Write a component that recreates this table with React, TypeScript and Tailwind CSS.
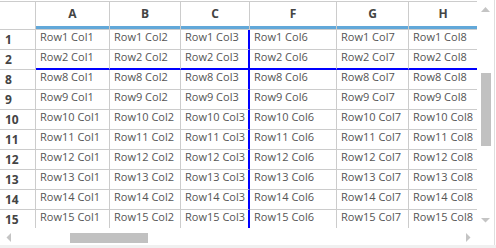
import clsx from "clsx";

const columns = [
  { label: "A", n: 1 },
  { label: "B", n: 2 },
  { label: "C", n: 3 },
  { label: "F", n: 6 },
  { label: "G", n: 7 },
  { label: "H", n: 8 },
];

const rows = [1, 2, 8, 9, 10, 11, 12, 13, 14, 15];

// frozen split: after column C and after row 2
const FROZEN_COL = 2;
const FROZEN_ROW = 1;

function Cell({ row, rowIdx, col, colIdx }: { row: number; rowIdx: number; col: number; colIdx: number }) {
  const last = rowIdx === rows.length - 1;
  return (
    <div
      className={clsx(
        "overflow-hidden whitespace-nowrap pl-[4px] text-[11px] leading-[13px] text-[#555]",
        last ? "h-[18px]" : "h-[20px]",
        colIdx === FROZEN_COL ? "border-r-2 border-r-[#0000ff]" : colIdx < columns.length - 1 ? "border-r border-r-[#cccccc]" : "",
        rowIdx === FROZEN_ROW ? "border-b-2 border-b-[#0000ff]" : !last ? "border-b border-b-[#cccccc]" : ""
      )}
    >
      Row{row} Col{col}
    </div>
  );
}

function ScrollbarY() {
  return (
    <div className="flex h-[228px] w-[17px] flex-col">
      <svg width="17" height="17" className="shrink-0">
        <polygon points="4,12 8.5,7 13,12" fill="#c4c4c4" />
      </svg>
      <div className="ml-[4px] mt-[56px] h-[73px] w-[10px] bg-[#c1c1c1]" />
      <div className="flex-1" />
      <svg width="17" height="17" className="shrink-0">
        <polygon points="4,7 13,7 8.5,11.5" fill="#c4c4c4" />
      </svg>
    </div>
  );
}

function ScrollbarX() {
  return (
    <div className="flex h-[17px] w-[477px]">
      <svg width="17" height="17" className="shrink-0">
        <polygon points="11,5 11,14 6.5,9.5" fill="#c4c4c4" />
      </svg>
      <div className="ml-[53px] mt-[5px] h-[10px] w-[78px] bg-[#c1c1c1]" />
      <div className="flex-1" />
      <svg width="17" height="17" className="shrink-0">
        <polygon points="6,5 6,14 10.5,9.5" fill="#c4c4c4" />
      </svg>
    </div>
  );
}

export default function App() {
  return (
    <div className="h-[248px] w-[496px] bg-white font-['Open_Sans',sans-serif]">
      <div className="h-[245px] w-[495px] border-r border-[#dedede]">
        <div className="flex">
          <div className="w-[477px] overflow-hidden pt-px">
            <div className="grid grid-cols-[36px_74px_71px_69px_87px_72px_68px]">
              {/* header row */}
              <div className="h-[29px] border-y border-r border-[#cccccc]" />
              {columns.map((c, i) => (
                <div
                  key={c.label}
                  className={clsx(
                    "h-[29px] border-y border-[#cccccc]",
                    i < columns.length - 1 && "border-r"
                  )}
                >
                  <div className="h-[27px] border-b-[3px] border-[#62a8d9] text-center text-[12px] font-bold leading-[24px] text-[#444]">
                    {c.label}
                  </div>
                </div>
              ))}

              {rows.map((r, ri) => {
                const last = ri === rows.length - 1;
                return [
                  <div
                    key={`h${r}`}
                    className={clsx(
                      "border-r border-[#cccccc] pl-[5px] text-[12px] font-bold leading-[19px] text-[#444]",
                      last ? "h-[18px]" : "h-[20px] border-b"
                    )}
                  >
                    {r}
                  </div>,
                  ...columns.map((c, ci) => (
                    <Cell key={`${r}-${c.label}`} row={r} rowIdx={ri} col={c.n} colIdx={ci} />
                  )),
                ];
              })}
            </div>
          </div>
          <ScrollbarY />
        </div>
        <div className="flex">
          <ScrollbarX />
          <div className="h-[17px] w-[17px]" />
        </div>
      </div>
      <div className="h-[3px] w-full bg-[#f0f0f0]" />
    </div>
  );
}
